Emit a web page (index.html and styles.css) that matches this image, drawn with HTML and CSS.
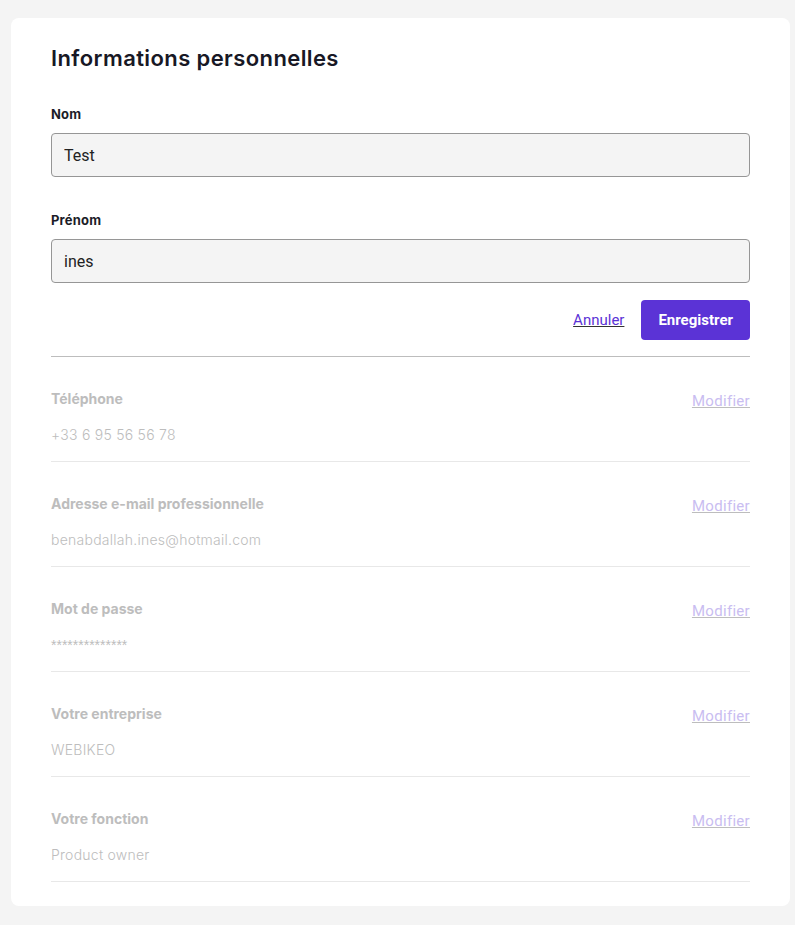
FILE: index.html
```html
<!DOCTYPE html>
<html lang="fr">
<head>
  <meta charset="UTF-8" />
  <meta name="viewport" content="width=device-width, initial-scale=1.0" />
  <title>Informations personnelles</title>
  <link rel="stylesheet" href="styles.css">
</head>
<body>
  <div class="card">
    <h1 class="title">Informations personnelles</h1>

    <div class="field">
      <label class="label" for="nom">Nom</label>
      <input id="nom" class="input" value="Test" />
    </div>

    <div class="field">
      <label class="label" for="prenom">Prénom</label>
      <input id="prenom" class="input" value="ines" />
    </div>

    <div class="actions">
      <a href="#" class="cancel">Annuler</a>
      <button class="save">Enregistrer</button>
    </div>

    <div class="rows">
      <div class="row">
        <div class="row-text">
          <div class="row-label">Téléphone</div>
          <div class="row-value">+33 6 95 56 56 78</div>
        </div>
        <a href="#" class="edit">Modifier</a>
      </div>
      <div class="row">
        <div class="row-text">
          <div class="row-label">Adresse e-mail professionnelle</div>
          <div class="row-value">benabdallah.ines@hotmail.com</div>
        </div>
        <a href="#" class="edit">Modifier</a>
      </div>
      <div class="row">
        <div class="row-text">
          <div class="row-label">Mot de passe</div>
          <div class="row-value pass">**************</div>
        </div>
        <a href="#" class="edit">Modifier</a>
      </div>
      <div class="row">
        <div class="row-text">
          <div class="row-label">Votre entreprise</div>
          <div class="row-value">WEBIKEO</div>
        </div>
        <a href="#" class="edit">Modifier</a>
      </div>
      <div class="row">
        <div class="row-text">
          <div class="row-label">Votre fonction</div>
          <div class="row-value">Product owner</div>
        </div>
        <a href="#" class="edit">Modifier</a>
      </div>
    </div>
  </div>
</body>
</html>
```

FILE: styles.css
```css
body {
  margin: 0;
  padding: 18px 5px 19px 11px;
  background-color: #f4f4f4;
  font-family: 'Inter', 'Noto Sans', sans-serif;
  color: #1c1c28;
}

.card {
  background: #fff;
  border-radius: 8px;
  padding: 26px 40px 24px 40px;
}

.title {
  margin: 0 0 33px;
  font-size: 22px;
  font-weight: 600;
  line-height: 28px;
  letter-spacing: 0.4px;
  color: #181825;
}

.field {
  display: flex;
  flex-direction: column;
  margin-bottom: 34px;
}

.field:nth-of-type(2) {
  margin-bottom: 17px;
}

.label {
  font-size: 13px;
  font-weight: 700;
  line-height: 18px;
  letter-spacing: 0.2px;
  margin-bottom: 10px;
}

.input {
  height: 44px;
  box-sizing: border-box;
  padding: 0 12px;
  border: 1px solid #969696;
  border-radius: 4px;
  background: #f4f4f4;
  font-family: 'Roboto', sans-serif;
  font-size: 16px;
  color: #222;
  outline: none;
}

.actions {
  display: flex;
  justify-content: flex-end;
  align-items: center;
  gap: 17px;
  padding-bottom: 16px;
  border-bottom: 1px solid #bdbdbd;
}

.cancel {
  font-family: 'Roboto', sans-serif;
  font-size: 15px;
  color: #5b33d6;
  text-decoration: underline;
  text-decoration-color: #333;
}

.save {
  height: 40px;
  padding: 0 17px;
  border: none;
  border-radius: 4px;
  background: #5b33d6;
  color: #fff;
  font-family: 'Roboto', sans-serif;
  font-size: 15px;
  font-weight: 700;
  cursor: pointer;
}

.row {
  display: flex;
  justify-content: space-between;
  align-items: flex-start;
  padding: 33px 0 17px;
  border-bottom: 1px solid #e8e8e8;
}

.row-label {
  font-size: 14px;
  font-weight: 700;
  line-height: 18px;
  color: #bdbdbd;
  margin-bottom: 18px;
}

.row-value {
  font-size: 14px;
  font-weight: 300;
  line-height: 18px;
  letter-spacing: 0.25px;
  color: #bdbdbd;
}

.row-value.pass {
  font-family: 'Liberation Sans', sans-serif;
  letter-spacing: 0;
}

.edit {
  margin-top: 2px;
  font-family: 'Roboto', sans-serif;
  font-size: 15px;
  letter-spacing: 0.3px;
  color: #c9bdf1;
  text-decoration: underline;
  text-decoration-color: #bdbdbd;
}
```
